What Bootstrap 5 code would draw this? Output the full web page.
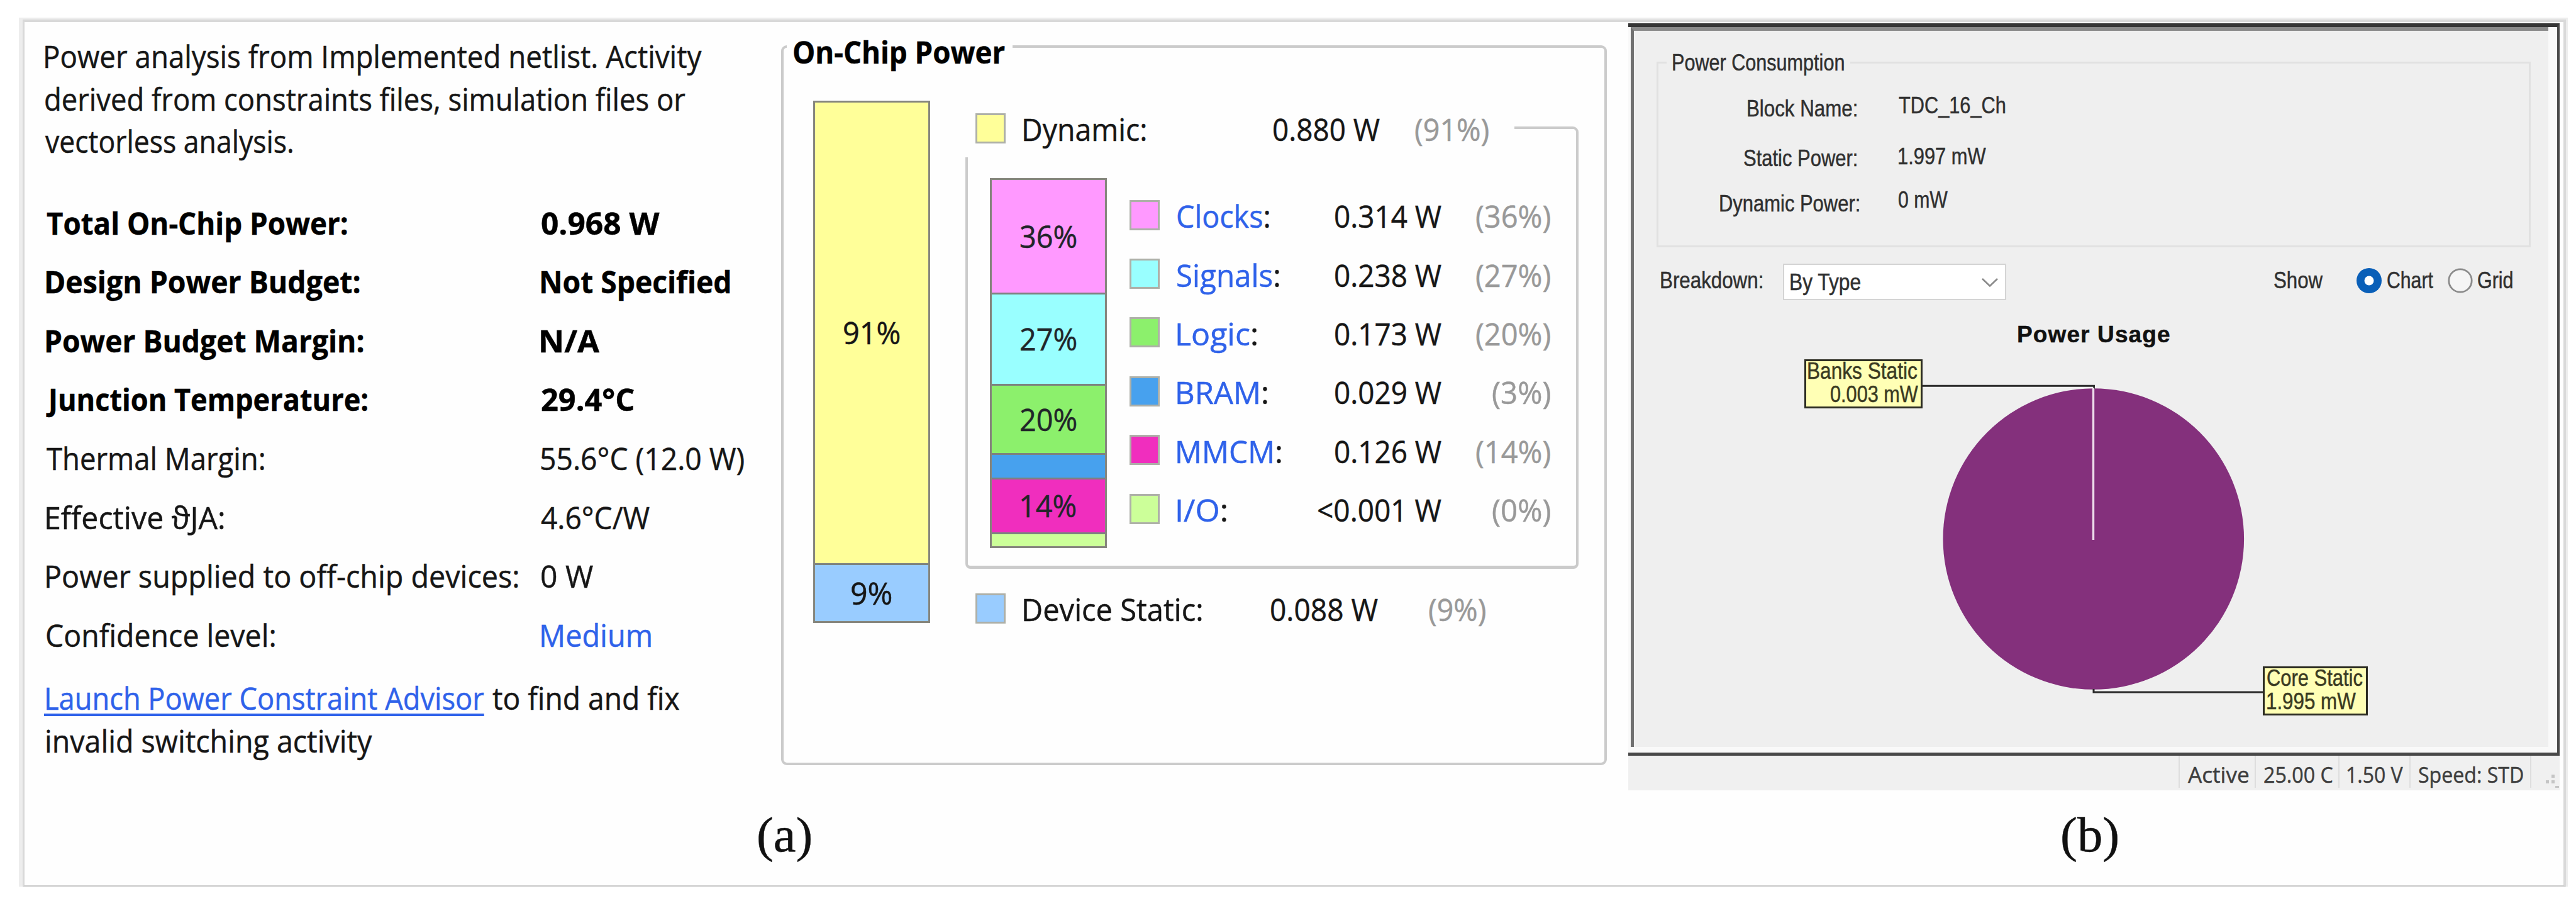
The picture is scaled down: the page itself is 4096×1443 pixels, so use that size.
<!DOCTYPE html>
<html lang="en">
<head>
<meta charset="utf-8">
<title>Power reports</title>
<link rel="stylesheet" href="https://cdn.jsdelivr.net/npm/bootstrap@5.3.0/dist/css/bootstrap.min.css">
<style>
body{margin:0;background:#fff;width:4096px;height:1443px;overflow:hidden;color:#161616;font-family:"Open Sans","Noto Sans",sans-serif;font-size:49px}
.t{display:inline-block;white-space:pre;transform-origin:0 50%;-webkit-text-stroke:.5px currentColor}
.sheet-ring{margin:28px 13px 0 30px;padding:3px 3px 0 6px;background:#ededed;width:4053px}
.sheet{border:solid #d9d9d9;border-width:4px 4px 2px 3px;border-bottom-color:#c8c8c8;background:#fefefe;width:4044px;height:1378px}
.panels{height:1246.5px}
/* summary */
.summary{width:1203px;padding:21.4px 0 0 33px}
.intro{line-height:67.3px;margin-bottom:49.4px}
.kv{height:93.6px;line-height:93.6px;padding-left:1.5px}
.kv>:first-child{width:787px}
.advice{line-height:68px;margin-top:18.6px;padding-left:1.5px}
.lnk{color:#2f62ea}
.advice .lnk{text-decoration:underline;text-decoration-thickness:4px;text-underline-offset:6px;text-decoration-skip-ink:none}
.strong{font-weight:700;color:#000}
/* on-chip power */
.chip{margin-top:37px;width:1313px;height:1144px;border:4px solid #cbcbcb;border-radius:9px}
.chip-title{width:359px;height:60px;line-height:60px;margin:-24px 0 0 5px;padding-left:11px;background:#fefefe}
.chip-body{padding:48px 0 0 47px}
.stack{width:186px;border:3px solid #86867e}
.stack>div{border-top:3px solid #7d8280}
.stack>div:first-child{border-top:0}
.stack1{height:830px}
.stack2{height:588px;margin:33px 37px 0 35px}
.yel{background:#ffff99}.sky{background:#99ccff}.pnk{background:#ff99ff}.cyn{background:#99ffff}.grn{background:#8cf06c}.blu{background:#47a1ee}.mag{background:#f02ebe}.lim{background:#ccff99}
.sw{width:48px;height:48px;border:3px solid #aeb0a8}
.detail{width:975px;margin-left:56px}
.lrow{height:90px;line-height:90px;padding-left:16px}
.lrow .sw{margin-right:29px;margin-bottom:3px}
.pct{color:#999}
.corner{width:102px;height:49px;border:solid #cbcbcb;border-width:4px 4px 0 0;border-top-right-radius:9px}
.inner{height:653.5px;border:4px solid #cbcbcb;border-top:0;border-bottom-width:5px;border-radius:0 0 8px 8px}
.legend6{padding-top:45px;margin-left:-1px}
.legend6>div{height:93.4px;line-height:89px}
.legend6 .sw{margin-right:28px}
.legend6 .tx{padding-top:4px}
.name{width:223px}.val{width:197px}.pc{width:173px}
/* designer window */
.win{margin:2px 0 0 34px;width:1481px;font-family:"Liberation Sans",Arial,sans-serif;font-size:36px;color:#303030}
.win-frame{height:1164px;border:solid #484848;border-width:6px 4px 5px 0;border-top-color:#363636;padding:0 14px 9px 4px;background:#f9f9f9}
.win-body{height:1144px;background:#efefef;border-left:5px solid #707070;border-top:6px solid #8a8a8a}
.group{margin:49px 0 0 36px;width:1390px;height:295px;border:3px solid #e1e1e1}
.group-title{width:292px;height:40px;line-height:40px;margin:-21px 0 0 13px;padding-left:10px;background:#efefef}
.gl{width:319px;line-height:40px}
.gv{margin-left:64px;line-height:40px}
.gl>div,.gv>div{height:40px}
.controls{height:57.7px;margin-top:25.7px;padding-left:43px}
.controls .tx{line-height:40px;padding-bottom:3px}
.pick{width:355px;height:58px;background:#fff;border:2px solid #d4d4d4;padding:2px 10px 0 10px}
.chart-title{height:44px;line-height:44px;margin-top:33.4px;padding-left:611px;font-size:37px;font-weight:700;color:#111}
.chart{height:633px}
.callout{position:absolute;height:78px;border:3px solid #2c2c22;background:#ffffb5;line-height:37.7px;color:#3a3a22}
.callout>div{height:37.7px}
.callout>div:first-child{margin-top:-3px}
.c1{left:271px;top:17px;width:188px;padding:0 4px 0 3px}
.c2{left:1000px;top:505px;width:167px;padding-left:4px}
.status{height:55px;background:#f0f0f0;font-family:"Open Sans",sans-serif;font-size:35px;line-height:51px;color:#3e3e3e}
.status>div{border-left:2px solid #dedede;height:51px;padding:4px 0 0 13px}
.cap{font-family:"Liberation Serif","Times New Roman",serif;font-size:78px;line-height:90px;color:#111}
</style>
<script src="https://cdn.jsdelivr.net/npm/bootstrap@5.3.0/dist/js/bootstrap.bundle.min.js"></script>
</head>
<body>
<div class="sheet-ring"><div class="sheet">
<div class="panels d-flex align-items-start">

  <section class="summary">
    <div class="intro">
      <div><span class="t" data-w="1044">Power analysis from Implemented netlist. Activity</span></div>
      <div><span class="t" data-w="1018">derived from constraints files, simulation files or</span></div>
      <div><span class="t" data-w="393">vectorless analysis.</span></div>
    </div>
    <div class="kv strong d-flex"><div><span class="t" data-w="478">Total On-Chip Power:</span></div><div><span class="t" data-w="188">0.968 W</span></div></div>
    <div class="kv strong d-flex"><div><span class="t" data-w="498">Design Power Budget:</span></div><div><span class="t" data-w="300">Not Specified</span></div></div>
    <div class="kv strong d-flex"><div><span class="t" data-w="504">Power Budget Margin:</span></div><div><span class="t" data-w="93">N/A</span></div></div>
    <div class="kv strong d-flex"><div><span class="t" data-w="511">Junction Temperature:</span></div><div><span class="t" data-w="147">29.4°C</span></div></div>
    <div class="kv d-flex"><div><span class="t" data-w="346">Thermal Margin:</span></div><div><span class="t" data-w="322">55.6°C (12.0 W)</span></div></div>
    <div class="kv d-flex"><div><span class="t" data-w="282">Effective ϑJA:</span></div><div><span class="t" data-w="172">4.6°C/W</span></div></div>
    <div class="kv d-flex"><div><span class="t" data-w="750">Power supplied to off-chip devices:</span></div><div><span class="t" data-w="82">0 W</span></div></div>
    <div class="kv d-flex"><div><span class="t" data-w="363">Confidence level:</span></div><div class="lnk"><span class="t" data-w="174">Medium</span></div></div>
    <div class="advice">
      <div class="d-flex"><a class="lnk t" data-w="696" href="#">Launch Power Constraint Advisor</a><span style="width:13px"></span><span class="t" data-w="297">to find and fix</span></div>
      <div><span class="t" data-w="518">invalid switching activity</span></div>
    </div>
  </section>

  <section class="chip">
    <div class="chip-title strong"><span class="t" data-w="336">On-Chip Power</span></div>
    <div class="chip-body d-flex align-items-start">
      <div class="stack stack1 d-flex flex-column">
        <div class="yel d-flex align-items-center justify-content-center" style="height:732px"><span class="t" data-w="89">91%</span></div>
        <div class="sky flex-fill d-flex align-items-center justify-content-center"><span class="t" data-w="64">9%</span></div>
      </div>
      <div class="detail">
        <div class="lrow d-flex align-items-center"><div class="sw yel"></div><div style="width:397px"><span class="t" data-w="194">Dynamic:</span></div><div style="width:225px"><span class="t" data-w="169">0.880 W</span></div><div class="pct"><span class="t" data-w="117">(91%)</span></div><div class="corner ms-auto align-self-end"></div></div>
        <div class="inner d-flex align-items-start">
          <div class="stack stack2 d-flex flex-column text-dark">
            <div class="pnk d-flex align-items-center justify-content-center" style="height:179px"><span class="t" data-w="89">36%</span></div>
            <div class="cyn d-flex align-items-center justify-content-center" style="height:145px"><span class="t" data-w="89">27%</span></div>
            <div class="grn d-flex align-items-center justify-content-center" style="height:110px"><span class="t" data-w="89">20%</span></div>
            <div class="blu" style="height:39px"></div>
            <div class="mag d-flex align-items-center justify-content-center" style="height:87px"><span class="t" data-w="87">14%</span></div>
            <div class="lim flex-fill"></div>
          </div>
          <div class="legend6">
            <div class="d-flex align-items-center"><div class="sw pnk"></div><div class="tx name"><span class="t" data-w="146"><span class="lnk">Clocks</span>:</span></div><div class="tx val text-end"><span class="t" data-w="169">0.314 W</span></div><div class="tx pc pct text-end"><span class="t" data-w="118">(36%)</span></div></div>
            <div class="d-flex align-items-center"><div class="sw cyn"></div><div class="tx name"><span class="t" data-w="162"><span class="lnk">Signals</span>:</span></div><div class="tx val text-end"><span class="t" data-w="169">0.238 W</span></div><div class="tx pc pct text-end"><span class="t" data-w="118">(27%)</span></div></div>
            <div class="d-flex align-items-center"><div class="sw grn"></div><div class="tx name"><span class="t" data-w="126"><span class="lnk">Logic</span>:</span></div><div class="tx val text-end"><span class="t" data-w="169">0.173 W</span></div><div class="tx pc pct text-end"><span class="t" data-w="118">(20%)</span></div></div>
            <div class="d-flex align-items-center"><div class="sw blu"></div><div class="tx name"><span class="t" data-w="143"><span class="lnk">BRAM</span>:</span></div><div class="tx val text-end"><span class="t" data-w="169">0.029 W</span></div><div class="tx pc pct text-end"><span class="t" data-w="92">(3%)</span></div></div>
            <div class="d-flex align-items-center"><div class="sw mag"></div><div class="tx name"><span class="t" data-w="165"><span class="lnk">MMCM</span>:</span></div><div class="tx val text-end"><span class="t" data-w="169">0.126 W</span></div><div class="tx pc pct text-end"><span class="t" data-w="118">(14%)</span></div></div>
            <div class="d-flex align-items-center"><div class="sw lim"></div><div class="tx name"><span class="t" data-w="78"><span class="lnk">I/O</span>:</span></div><div class="tx val text-end"><span class="t" data-w="196">&lt;0.001 W</span></div><div class="tx pc pct text-end"><span class="t" data-w="92">(0%)</span></div></div>
          </div>
        </div>
        <div class="lrow d-flex align-items-center" style="margin-top:19.5px"><div class="sw sky"></div><div style="width:393px"><span class="t" data-w="283">Device Static:</span></div><div style="width:251px"><span class="t" data-w="170">0.088 W</span></div><div class="pct"><span class="t" data-w="90">(9%)</span></div></div>
      </div>
    </div>
  </section>

  <section class="win">
    <div class="win-frame"><div class="win-body">
      <div class="d-flex"><div class="group">
        <div class="group-title"><span class="t" data-w="272">Power Consumption</span></div>
        <div class="d-flex">
          <div class="gl text-end" style="padding-top:32.5px;width:315px">
            <div style="margin-bottom:39px"><span class="t" data-w="173">Block Name:</span></div>
            <div style="margin-bottom:32px"><span class="t" data-w="179">Static Power:</span></div>
            <div style="margin-right:-4px"><span class="t" data-w="221">Dynamic Power:</span></div>
          </div>
          <div class="gv" style="padding-top:27.5px;margin-left:67px">
            <div style="margin-bottom:41px"><span class="t" data-w="169">TDC_16_Ch</span></div>
            <div style="margin-bottom:29.5px"><span class="t" data-w="139">1.997 mW</span></div>
            <div><span class="t" data-w="78">0 mW</span></div>
          </div>
        </div>
      </div></div>
      <div class="controls d-flex align-items-center">
        <div class="tx" style="width:194px"><span class="t" data-w="161">Breakdown:</span></div>
        <div class="pick d-flex align-items-center justify-content-between"><span class="t" data-w="112">By Type</span>
          <svg width="28" height="16" viewBox="0 0 28 16"><path d="M2 2 L14 13.5 L26 2" fill="none" stroke="#8a8a8a" stroke-width="2.6"/></svg></div>
        <div class="tx" style="width:131px;margin-left:426px"><span class="t" data-w="78">Show</span></div>
        <svg width="40" height="40" viewBox="0 0 40 40" style="margin-bottom:4px"><circle cx="20" cy="20" r="20" fill="#0a5fb8"/><circle cx="20" cy="20" r="7.5" fill="#fff"/></svg>
        <div class="tx" style="width:105px;padding-left:9px"><span class="t" data-w="73">Chart</span></div>
        <svg width="40" height="40" viewBox="0 0 40 40" style="margin-bottom:4px"><circle cx="20" cy="20" r="18.2" fill="#f5f5f5" stroke="#8b8b8b" stroke-width="2.8"/></svg>
        <div class="tx ps-2"><span class="t" data-w="55">Grid</span></div>
      </div>
      <div class="chart-title"><span class="t" data-w="241" data-track="1">Power Usage</span></div>
      <div class="chart position-relative">
        <svg class="d-block" width="1454" height="633" viewBox="0 0 1454 633">
          <circle cx="730.8" cy="302.5" r="239.3" fill="#84307c"/>
          <path d="M458 59.2 H731.5 V64" fill="none" stroke="#2b2b2b" stroke-width="3"/>
          <path d="M731 541 V546 H1002" fill="none" stroke="#2b2b2b" stroke-width="3"/>
          <path d="M730.5 62 V304" stroke="#ecdcea" stroke-width="3.4"/>
        </svg>
        <div class="callout c1"><div><span class="t" data-w="174">Banks Static</span></div><div class="text-end"><span class="t" data-w="139">0.003 mW</span></div></div>
        <div class="callout c2"><div><span class="t" data-w="152">Core Static</span></div><div><span class="t" data-w="141">1.995 mW</span></div></div>
      </div>
    </div></div>
    <div class="status d-flex" style="padding-left:875px">
      <div style="width:121px"><span class="t" data-w="96">Active</span></div>
      <div style="width:133px"><span class="t" data-w="109">25.00 C</span></div>
      <div style="width:113px"><span class="t" data-w="88">1.50 V</span></div>
      <div style="width:192px"><span class="t" data-w="166">Speed: STD</span></div>
      <div class="p-0 flex-fill d-flex justify-content-end align-items-end"><svg width="24" height="22" viewBox="0 0 24 22"><g fill="#c4c4c4"><rect x="11" y="1" width="5" height="5"/><rect x="2" y="10" width="5" height="5"/><rect x="11" y="10" width="5" height="5"/><rect x="17" y="19" width="6" height="3"/></g></svg></div>
    </div>
  </section>
</div>
<div class="cap d-flex"><div style="margin-left:1167px;width:2073.5px"><span class="t" data-w="83">(a)</span></div><div><span class="t" data-w="88">(b)</span></div></div>
</div></div>
<script>
// Fits each label to the inked width data-w: condensed by default, by tracking when data-track is set.
var ctx = document.createElement('canvas').getContext('2d');
document.querySelectorAll('.t[data-w]').forEach(function (el) {
  var cs = getComputedStyle(el), s = el.textContent, w = +el.dataset.w;
  ctx.font = cs.fontWeight + ' ' + cs.fontSize + ' ' + cs.fontFamily;
  var m = ctx.measureText(s), ink = m.actualBoundingBoxRight + m.actualBoundingBoxLeft;
  if (el.dataset.track) {
    el.style.letterSpacing = (w - ink) / (s.length - 1) + 'px';
    el.style.marginLeft = m.actualBoundingBoxLeft + 'px';
    return;
  }
  var k = w / ink, left = m.actualBoundingBoxLeft * k;
  el.style.transform = 'scaleX(' + k + ')';
  el.style.marginLeft = left + 'px';
  el.style.marginRight = (w - left - el.offsetWidth) + 'px';
});
</script>
</body>
</html>
